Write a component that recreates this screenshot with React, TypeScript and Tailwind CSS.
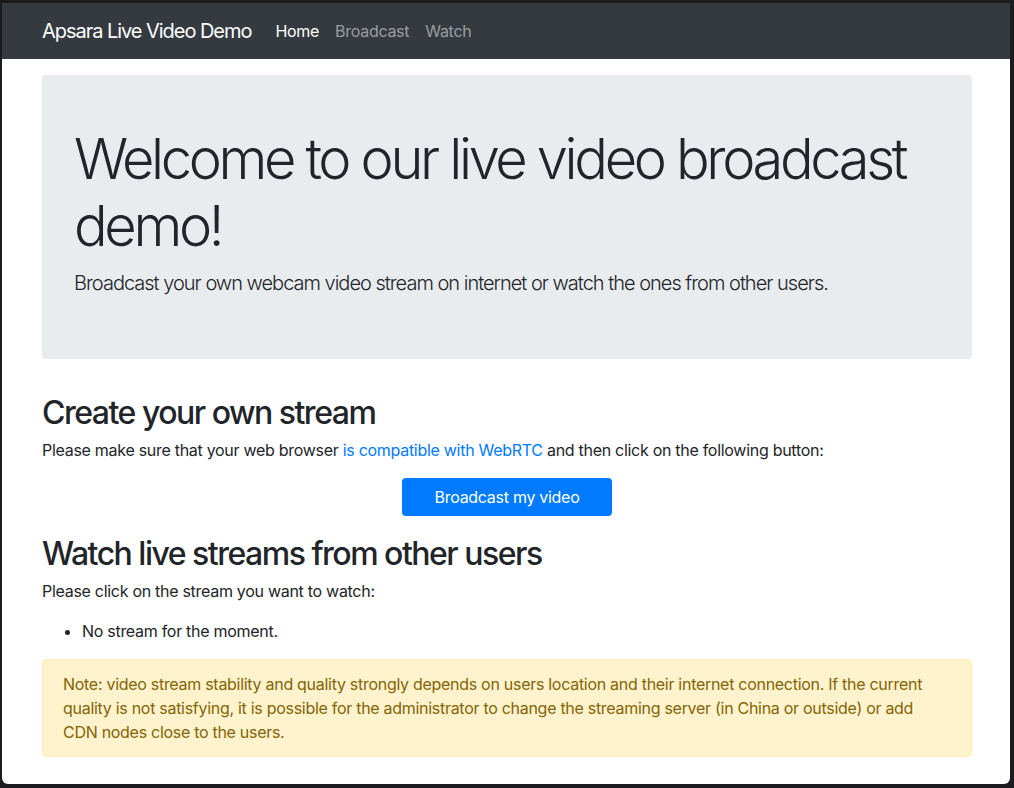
export default function App() {
  return (
    <div className="w-[1014px] h-[788px] bg-[#1c1c1e] pt-[3px] pl-[2px] pr-[4px] pb-[4px]">
      <div className="h-full bg-white rounded-b-[6px] overflow-hidden font-['Inter','Noto_Sans',sans-serif] text-[#212529] tracking-[-0.018em]">
        <nav className="h-[56px] bg-[#343a40] flex items-center pl-[40px]">
          <a className="text-[20px] leading-[30px] text-white mr-4 tracking-[-0.052em]">Apsara Live Video Demo</a>
          <a className="text-[16px] leading-[24px] px-2 text-white">Home</a>
          <a className="text-[16px] leading-[24px] px-2 text-white/50">Broadcast</a>
          <a className="text-[16px] leading-[24px] px-2 text-white/50">Watch</a>
        </nav>

        <main className="w-[930px] ml-[40px] pt-4">
          <div className="bg-[#e9ecef] rounded-[4px] px-8 pt-[51px] pb-[61px] mb-8">
            <h1 className="text-[56px] font-light leading-[1.2] mb-2 tracking-[-0.06em]">
              Welcome to our live video broadcast demo!
            </h1>
            <p className="text-[20px] font-light leading-[30px] tracking-[-0.05em]">
              Broadcast your own webcam video stream on internet or watch the ones from other users.
            </p>
          </div>

          <h2 className="text-[32px] font-medium leading-[1.2] pt-[3px] mb-[5px] tracking-[-0.047em]">Create your own stream</h2>
          <p className="text-[16px] leading-[24px] mb-4">
            Please make sure that your web browser{' '}
            <a className="text-[#007bff]">is compatible with WebRTC</a> and then click on the following button:
          </p>
          <div className="flex justify-center mb-[17px]">
            <button className="w-[210px] h-[38px] bg-[#007bff] text-white text-[16px] rounded-[4px] tracking-[-0.018em]">
              Broadcast my video
            </button>
          </div>

          <h2 className="text-[32px] font-medium leading-[1.2] pt-[2px] mb-[6px] tracking-[-0.047em]">Watch live streams from other users</h2>
          <p className="text-[16px] leading-[24px] mb-4">Please click on the stream you want to watch:</p>
          <ul className="list-disc pl-10 mb-4 text-[16px] leading-[24px]">
            <li>No stream for the moment.</li>
          </ul>

          <div className="bg-[#fff3cd] border border-[#ffeeba] text-[#856404] rounded-[4px] px-5 py-3 text-[16px] leading-[24px]">
            Note: video stream stability and quality strongly depends on users location and their internet connection. If the current quality is not satisfying, it is possible for the administrator to change the streaming server (in China or outside) or add CDN nodes close to the users.
          </div>
        </main>
      </div>
    </div>
  );
}
